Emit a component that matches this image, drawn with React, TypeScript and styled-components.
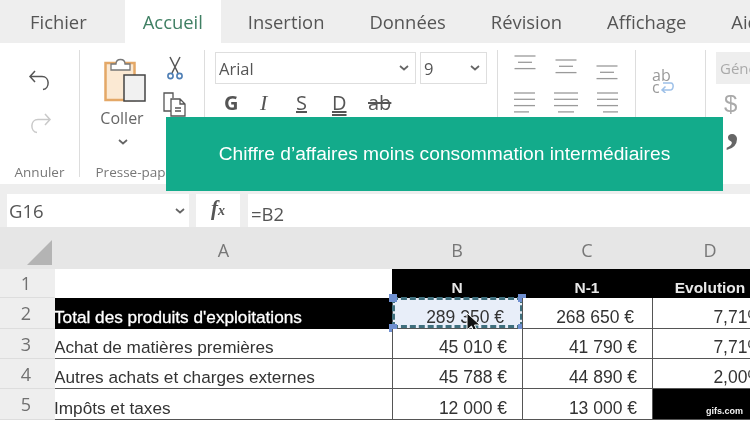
import { createGlobalStyle, styled } from 'styled-components'

const GlobalStyle = createGlobalStyle`
  html, body {
    margin: 0;
    padding: 0;
    background: #ffffff;
    overflow: hidden;
  }
`

const UI_FONT = `"Open Sans", "Noto Sans", sans-serif`
const CELL_FONT = `"Liberation Sans", Arial, sans-serif`

const tabs = ['Fichier', 'Accueil', 'Insertion', 'Données', 'Révision', 'Affichage', 'Aide']

const rows = [
  { n: 1, a: '', b: 'N', c: 'N-1', d: 'Evolution', head: true },
  { n: 2, a: "Total des produits d'exploitations", b: '289 350 €', c: '268 650 €', d: '7,71%', dark: true },
  { n: 3, a: 'Achat de matières premières', b: '45 010 €', c: '41 790 €', d: '7,71%' },
  { n: 4, a: 'Autres achats et charges externes', b: '45 788 €', c: '44 890 €', d: '2,00%' },
  { n: 5, a: 'Impôts et taxes', b: '12 000 €', c: '13 000 €', d: '', blackD: true },
]

const Undo = ({ muted }: { muted?: boolean }) => (
  <svg width="26" height="26" viewBox="0 0 26 26" fill="none" stroke={muted ? '#c9c9c9' : '#555'} strokeWidth="1.5">
    {muted ? (
      <path d="M18 4l5 5.5-5 5.5M23 9.500H11c-8 0-8 12-1 13" />
    ) : (
      <path d="M8 4L3 9.500 8 15M3 9.500h12c8 0 8 12 1 13" />
    )}
  </svg>
)

const PasteIcon = () => (
  <svg width="44" height="48" viewBox="0 0 44 48" fill="none">
    <rect x="1.500" y="7" width="29" height="37" fill="#fbe9d3" stroke="#e4a867" strokeWidth="2.500" />
    <path d="M7 14V8h5c0-6 9-6 9 0h5v6z" fill="#fff" stroke="#777" strokeWidth="1.300" />
    <rect x="20" y="19" width="21" height="26" fill="#f1f1f1" stroke="#444" strokeWidth="1.500" />
  </svg>
)

const ScissorsIcon = () => (
  <svg width="18" height="24" viewBox="0 0 18 24" fill="none">
    <path d="M4 1l8 16M14 1L6 17" stroke="#555" strokeWidth="1.500" />
    <circle cx="4.500" cy="20" r="2.600" stroke="#4f7fb5" strokeWidth="1.600" />
    <circle cx="13.500" cy="20" r="2.600" stroke="#4f7fb5" strokeWidth="1.600" />
  </svg>
)

const CopyIcon = () => (
  <svg width="26" height="26" viewBox="0 0 26 26" fill="none" stroke="#555" strokeWidth="1.300">
    <path d="M9 20H2V2h9v5" />
    <path d="M9 8h9l5 5v12H9zM18 8v5h5M13 17h6M13 20h6" />
  </svg>
)

const AlignIcon = ({ lines, side = 'center' }: { lines: number[]; side?: 'left' | 'center' | 'right' }) => (
  <svg width="24" height="22" viewBox="0 0 24 22" stroke="#9a9a9a" strokeWidth="1.300">
    {lines.map((w, i) => {
      const x = side === 'left' ? 1 : side === 'right' ? 23 - w : (24 - w) / 2
      return <path key={i} d={`M${x} ${1 + i * 6.3}h${w}`} />
    })}
  </svg>
)

const WrapIcon = () => (
  <svg width="24" height="24" viewBox="0 0 24 24" fill="none">
    <path d="M11 14h8c3 0 3 7-1 7h-8m3.500-3.500L10 21l3.500 3" stroke="#9dc0e8" strokeWidth="1.500" />
  </svg>
)

const MergeIcon = () => (
  <svg width="24" height="10" viewBox="0 0 24 10" fill="none" stroke="#bbb" strokeWidth="1.200">
    <path d="M1 9V1h22v8M12 1v8" />
  </svg>
)

const Chevron = () => (
  <svg width="10" height="6" viewBox="0 0 10 6" fill="none" stroke="#666" strokeWidth="1.700">
    <path d="M1 1l4 3.500L9 1" />
  </svg>
)

const Cursor = () => (
  <svg width="16" height="24" viewBox="0 0 16 24">
    <path d="M1 1v17l4.500-4 3 7 3-1.300-3-6.700H14z" fill="#111" stroke="#fff" strokeWidth="1" />
  </svg>
)

const App = () => {
  return (
    <Page>
      <GlobalStyle />
      <TabBar>
        {tabs.map(t => (
          <Tab key={t} active={t === 'Accueil'}>
            {t}
          </Tab>
        ))}
      </TabBar>

      <Ribbon>
        <Group width={80}>
          <UndoStack>
            <Undo />
            <Undo muted />
          </UndoStack>
          <GroupLabel>Annuler</GroupLabel>
        </Group>

        <Group width={125}>
          <ClipRow>
            <PasteBlock>
              <PasteIcon />
              <PasteLabel>Coller</PasteLabel>
              <PasteChevron>
                <Chevron />
              </PasteChevron>
            </PasteBlock>
            <ClipTools>
              <ScissorsIcon />
              <CopyIcon />
            </ClipTools>
          </ClipRow>
          <GroupLabel>Presse-papiers</GroupLabel>
        </Group>

        <Group width={293}>
          <FontRow>
            <FontSelect width={201}>
              Arial
              <Chevron />
            </FontSelect>
            <FontSelect width={67}>
              9
              <Chevron />
            </FontSelect>
          </FontRow>
          <StyleRow>
            <StyleBtn bold>G</StyleBtn>
            <StyleBtn italic>I</StyleBtn>
            <StyleBtn underline>S</StyleBtn>
            <StyleBtn underline double>
              D
            </StyleBtn>
            <StyleBtn strike>ab</StyleBtn>
          </StyleRow>
        </Group>

        <Group width={138}>
          <AlignGrid>
            <AlignTop offset={0}>
              <AlignIcon lines={[21, 14, 21]} />
            </AlignTop>
            <AlignTop offset={4}>
              <AlignIcon lines={[21, 14, 21]} />
            </AlignTop>
            <AlignTop offset={10}>
              <AlignIcon lines={[21, 14, 21]} />
            </AlignTop>
            <AlignIcon lines={[21, 21, 21, 15]} side="left" />
            <AlignIcon lines={[24, 24, 24, 16]} />
            <AlignIcon lines={[21, 21, 21, 15]} side="right" />
          </AlignGrid>
        </Group>

        <Group width={70}>
          <WrapBlock>
            <WrapText>
              ab
              <br />c
            </WrapText>
            <WrapIconSlot>
              <WrapIcon />
            </WrapIconSlot>
          </WrapBlock>
          <MergeSlot>
            <MergeIcon />
          </MergeSlot>
        </Group>

        <NumberGroup>
          <NumberBox>Général</NumberBox>
          <Dollar>$</Dollar>
          <Comma>,</Comma>
        </NumberGroup>
      </Ribbon>

      <FormulaBar>
        <NameBox>
          G16
          <Chevron />
        </NameBox>
        <FxBox>
          f<small>x</small>
        </FxBox>
        <FormulaInput>=B2</FormulaInput>
      </FormulaBar>

      <Sheet>
        <Corner>
          <svg width="25" height="25" viewBox="0 0 25 25">
            <path d="M25 0v25H0z" fill="#b4b4b4" />
          </svg>
        </Corner>
        <ColHead>A</ColHead>
        <ColHead>B</ColHead>
        <ColHead>C</ColHead>
        <ColHead>D</ColHead>

        {rows.map(r => (
          <Row key={r.n}>
            <RowHead>{r.n}</RowHead>
            <LabelCell dark={r.dark} ruled={r.n > 2}>
              {r.a}
            </LabelCell>
            {r.head ? (
              <>
                <HeadCell>{r.b}</HeadCell>
                <HeadCell>{r.c}</HeadCell>
                <HeadCell>{r.d}</HeadCell>
              </>
            ) : (
              <>
                <NumCell selected={r.n === 2} wide={r.n === 2}>
                  {r.b}
                  {r.n === 2 && (
                    <>
                      <Marching />
                      <Handle x="left" y="top" />
                      <Handle x="right" y="top" />
                      <Handle x="left" y="bottom" />
                      <Handle x="right" y="bottom" />
                      <CursorSlot>
                        <Cursor />
                      </CursorSlot>
                    </>
                  )}
                </NumCell>
                <NumCell wide={r.n === 2}>{r.c}</NumCell>
                <NumCell black={r.blackD} last>
                  {r.d}
                </NumCell>
              </>
            )}
          </Row>
        ))}
      </Sheet>

      <Banner>Chiffre d’affaires moins consommation intermédiaires</Banner>
      <Watermark>gifs.com</Watermark>
    </Page>
  )
}

export default App

const Page = styled.div`
  position: relative;
  width: 750px;
  height: 422px;
  overflow: hidden;
  background: #ffffff;
  filter: blur(0.45px);
`

const TabBar = styled.div`
  display: flex;
  gap: 9px;
  height: 43px;
  padding-left: 12px;
  background: #eeeeee;
  white-space: nowrap;
`

const Tab = styled.div<{ active?: boolean }>`
  display: flex;
  align-items: center;
  padding: 0 18px;
  margin-left: ${props => (props.active ? '11px' : '0')};
  background: ${props => (props.active ? '#ffffff' : 'transparent')};
  color: ${props => (props.active ? '#3f7f63' : '#555555')};
  font: 400 18.400px ${UI_FONT};
`

const Ribbon = styled.div`
  display: flex;
  height: 141px;
  background: #ffffff;
  overflow: hidden;
`

const Group = styled.div<{ width: number }>`
  position: relative;
  display: flex;
  flex-direction: column;
  flex: 0 0 ${props => props.width}px;
  height: 127px;
  margin-top: 7px;
  border-right: 1px solid #dddddd;
  box-sizing: border-box;
`

const GroupLabel = styled.div`
  margin-top: auto;
  margin-bottom: -2px;
  text-align: center;
  color: #777777;
  font: 400 13.5px/14px ${UI_FONT};
  white-space: nowrap;
`

const UndoStack = styled.div`
  display: flex;
  flex-direction: column;
  align-items: center;
  gap: 17px;
  padding-top: 17px;
`

const ClipRow = styled.div`
  display: flex;
  padding: 6px 0 0 24px;
`

const PasteBlock = styled.div`
  display: flex;
  flex-direction: column;
  align-items: center;
  width: 44px;
`

const PasteLabel = styled.div`
  margin: 3px 8px 2px 0;
  color: #666666;
  font: 400 16px ${UI_FONT};
`

const PasteChevron = styled.div`
  margin-right: 6px;
`

const ClipTools = styled.div`
  display: flex;
  flex-direction: column;
  align-items: center;
  gap: 11px;
  margin-left: 14px;
`

const FontRow = styled.div`
  display: flex;
  gap: 4px;
  padding: 2px 0 0 10px;
`

const FontSelect = styled.div<{ width: number }>`
  display: flex;
  align-items: center;
  justify-content: space-between;
  width: ${props => props.width}px;
  height: 32px;
  padding: 0 6px 0 3px;
  box-sizing: border-box;
  border: 1px solid #dedede;
  color: #555555;
  font: 400 16.500px ${UI_FONT};
`

const StyleRow = styled.div`
  display: flex;
  padding: 5px 0 0 19px;
`

const StyleBtn = styled.div<{
  bold?: boolean
  italic?: boolean
  underline?: boolean
  double?: boolean
  strike?: boolean
}>`
  width: 36px;
  height: 30px;
  line-height: 28px;
  text-align: left;
  color: #555555;
  font-family: ${props => (props.italic ? `"Liberation Serif", serif` : UI_FONT)};
  font-size: ${props => (props.italic ? 22 : 20)}px;
  font-weight: ${props => (props.bold ? 700 : 400)};
  font-style: ${props => (props.italic ? 'italic' : 'normal')};
  text-decoration: ${props => (props.underline ? 'underline' : props.strike ? 'line-through' : 'none')};
  text-decoration-style: ${props => (props.double ? 'double' : 'solid')};
`

const AlignGrid = styled.div`
  display: grid;
  grid-template-columns: repeat(3, 24px);
  column-gap: 17px;
  row-gap: 14px;
  padding: 5px 0 0 15px;
`

const AlignTop = styled.div<{ offset: number }>`
  height: 23px;
  padding-top: ${props => props.offset}px;
  box-sizing: border-box;
`

const WrapBlock = styled.div`
  position: relative;
  width: 24px;
  margin: 19px 0 0 16px;
`

const WrapText = styled.div`
  color: #9a9a9a;
  font: 400 16px/12px ${UI_FONT};
`

const WrapIconSlot = styled.div`
  position: absolute;
  left: 0;
  top: 0;
`

const MergeSlot = styled.div`
  margin: 21px 0 0 12px;
`

const NumberGroup = styled.div`
  display: flex;
  flex-direction: column;
  padding: 9px 0 0 10px;
`

const NumberBox = styled.div`
  width: 80px;
  height: 32px;
  padding-left: 4px;
  background: #eeeeee;
  color: #aaaaaa;
  font: 400 15px/32px ${UI_FONT};
`

const Dollar = styled.div`
  margin: 3px 0 0 8px;
  color: #aaaaaa;
  font: 400 24px/34px ${CELL_FONT};
`

const Comma = styled.div`
  margin: -16px 0 0 10px;
  color: #666666;
  font: 700 52px/40px "Liberation Serif", serif;
`

const FormulaBar = styled.div`
  display: flex;
  height: 43px;
  padding: 10px 0 0 7px;
  box-sizing: border-box;
  background: #eeeeee;
`

const NameBox = styled.div`
  display: flex;
  align-items: center;
  justify-content: space-between;
  width: 182px;
  height: 33px;
  padding: 0 4px 0 2px;
  box-sizing: border-box;
  background: #ffffff;
  color: #555555;
  font: 400 18.500px ${UI_FONT};
`

const FxBox = styled.div`
  width: 44px;
  height: 33px;
  margin-left: 7px;
  background: #ffffff;
  color: #555555;
  text-align: center;
  font: italic 700 21px/29px "Liberation Serif", serif;

  small {
    font-size: 14px;
  }
`

const FormulaInput = styled.div`
  flex: 1;
  height: 33px;
  margin-left: 8px;
  padding: 5px 0 0 3px;
  box-sizing: border-box;
  background: #ffffff;
  color: #555555;
  font: 400 18.500px/30px ${UI_FONT};
`

const Sheet = styled.div`
  display: grid;
  grid-template-columns: 55px 337px 130px 130px 116px;
  grid-template-rows: 42px 29px 31px 30px 30px 31px;
`

const Corner = styled.div`
  display: flex;
  justify-content: flex-end;
  align-items: flex-end;
  padding: 0 3px 4px 0;
  background: #e6e6e6;
`

const ColHead = styled.div`
  display: flex;
  align-items: flex-end;
  justify-content: center;
  padding-bottom: 7px;
  background: #e6e6e6;
  color: #777777;
  font: 400 18px ${UI_FONT};
`

const Row = styled.div`
  display: contents;
`

const RowHead = styled.div`
  display: flex;
  align-items: center;
  justify-content: center;
  padding-right: 3px;
  background: #eeeeee;
  border-bottom: 1px solid #dddddd;
  color: #707070;
  font: 400 18px ${UI_FONT};
`

const LabelCell = styled.div<{ dark?: boolean; ruled?: boolean }>`
  display: flex;
  align-items: flex-end;
  padding-bottom: ${props => (props.dark ? 1 : 0)}px;
  box-sizing: border-box;
  overflow: hidden;
  white-space: nowrap;
  text-indent: -1px;
  background: ${props => (props.dark ? '#000000' : '#ffffff')};
  border-bottom: ${props => (props.ruled ? '1px solid #555555' : 'none')};
  color: ${props => (props.dark ? '#ffffff' : '#333333')};
  -webkit-text-stroke: ${props => (props.dark ? '0.3px #ffffff' : '0')};
  font: 400 17.200px ${CELL_FONT};
`

const HeadCell = styled.div`
  display: flex;
  align-items: flex-end;
  justify-content: center;
  padding-bottom: 1px;
  background: #000000;
  color: #e8e8e8;
  font: 700 15.500px ${CELL_FONT};
  white-space: nowrap;
`

const NumCell = styled.div<{ selected?: boolean; wide?: boolean; black?: boolean; last?: boolean }>`
  position: relative;
  display: flex;
  align-items: flex-end;
  justify-content: flex-end;
  padding-right: ${props => (props.last ? 5 : props.wide ? 18 : 15)}px;
  box-sizing: border-box;
  background: ${props => (props.black ? '#000000' : props.selected ? '#e8eef9' : '#ffffff')};
  border-left: 1px solid #555555;
  border-bottom: 1px solid #555555;
  color: #333333;
  font: 400 17.500px ${CELL_FONT};
  white-space: nowrap;
`

const Marching = styled.div`
  position: absolute;
  inset: -1px -1px 0 -1px;
  border: 3px dashed #3f6f7d;
`

const Handle = styled.div<{ x: 'left' | 'right'; y: 'top' | 'bottom' }>`
  position: absolute;
  ${props => props.x}: -4px;
  ${props => props.y}: -4px;
  width: 8px;
  height: 8px;
  background: #6f8fd0;
`

const CursorSlot = styled.div`
  position: absolute;
  left: 73px;
  top: 14px;
`

const Banner = styled.div`
  position: absolute;
  left: 166px;
  top: 117px;
  width: 557px;
  height: 74px;
  display: flex;
  align-items: center;
  justify-content: center;
  background: #13ab8b;
  color: #ffffff;
  font: 400 19.200px ${CELL_FONT};
`

const Watermark = styled.div`
  position: absolute;
  right: 7px;
  bottom: 6px;
  color: #f2f2f2;
  font: 700 9px ${CELL_FONT};
`
